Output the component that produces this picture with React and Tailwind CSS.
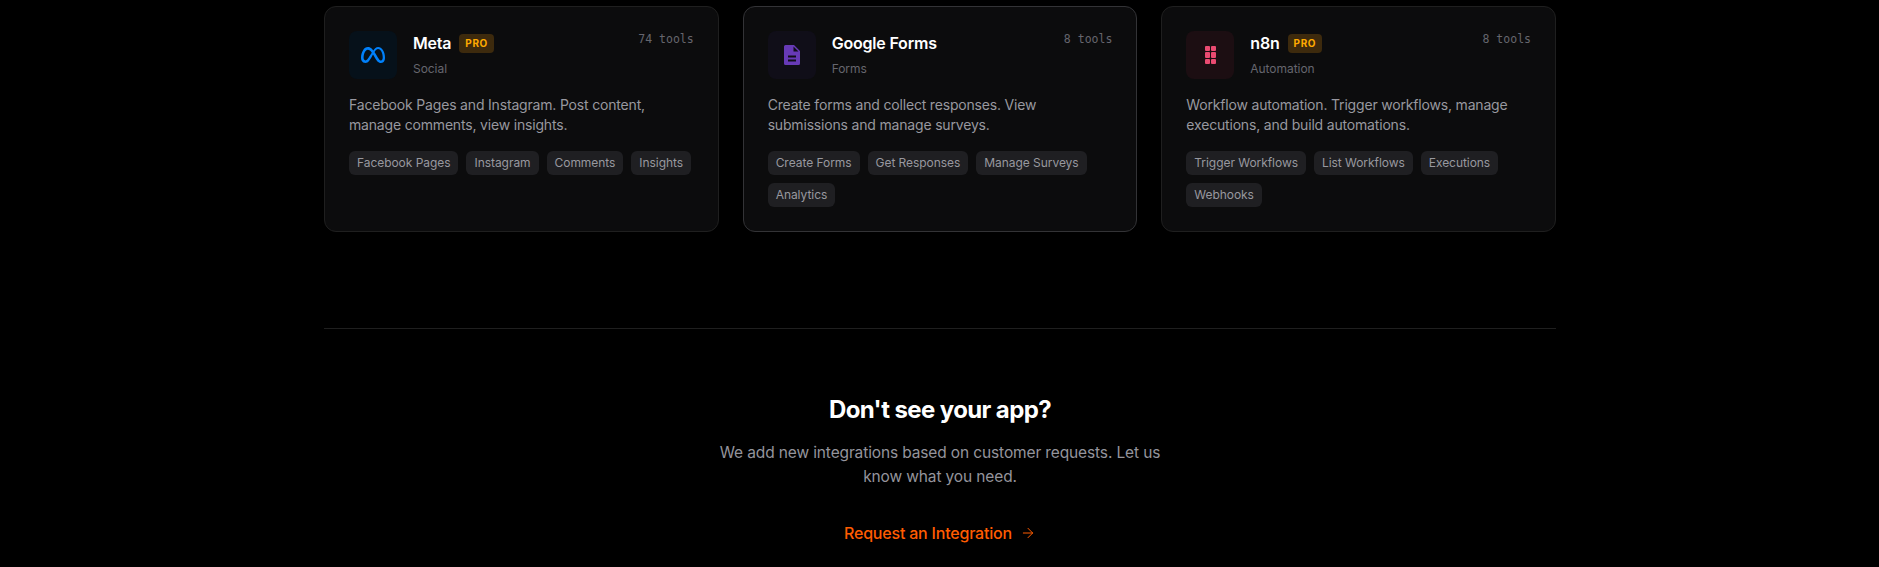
import React from 'react';
import { ArrowRight } from 'lucide-react';
import { SiMeta } from 'react-icons/si';

const FormsIcon = () => (
  <svg width="24" height="24" viewBox="0 0 24 24" fill="#673ab7">
    <path fillRule="evenodd" d="M5.5 2h8.5l6 6v12.5a1.5 1.5 0 0 1-1.5 1.5h-13A1.5 1.5 0 0 1 4 20.5v-17A1.5 1.5 0 0 1 5.5 2zM13.500 3.500V8.500h5zM8 12.500v2h8v-2zM8 16.500v2h8v-2z" />
  </svg>
);

const N8nIcon = () => (
  <div className="grid grid-cols-2 gap-px w-[11px]">
    {[0, 1, 2, 3, 4, 5].map(i => (
      <div key={i} className="h-[5.5px] rounded-[1px] bg-[#ea4b71]" />
    ))}
  </div>
);

const apps = [
  {
    name: 'Meta',
    pro: true,
    category: 'Social',
    tools: '74 tools',
    description: 'Facebook Pages and Instagram. Post content, manage comments, view insights.',
    tags: ['Facebook Pages', 'Instagram', 'Comments', 'Insights'],
    icon: <SiMeta size={24} color="#0081fb" />,
    iconBg: 'bg-[#06111a]',
    border: 'border-[#1f1f1f]',
  },
  {
    name: 'Google Forms',
    category: 'Forms',
    tools: '8 tools',
    description: 'Create forms and collect responses. View submissions and manage surveys.',
    tags: ['Create Forms', 'Get Responses', 'Manage Surveys', 'Analytics'],
    icon: <FormsIcon />,
    iconBg: 'bg-[#100e18]',
    border: 'border-[#333336]',
  },
  {
    name: 'n8n',
    pro: true,
    category: 'Automation',
    tools: '8 tools',
    description: 'Workflow automation. Trigger workflows, manage executions, and build automations.',
    tags: ['Trigger Workflows', 'List Workflows', 'Executions', 'Webhooks'],
    icon: <N8nIcon />,
    iconBg: 'bg-[#1c0e12]',
    border: 'border-[#1f1f1f]',
  },
];

const AppCard = ({ app }) => (
  <div className={`rounded-xl border ${app.border} bg-[#0c0c0d] p-6`}>
    <div className="flex items-start justify-between">
      <div className="flex items-start gap-4">
        <div className={`flex h-12 w-12 items-center justify-center rounded-lg ${app.iconBg}`}>
          {app.icon}
        </div>
        <div>
          <div className="flex items-center gap-2">
            <h3 className="text-base font-semibold leading-6 tracking-[-0.2px] text-white">{app.name}</h3>
            {app.pro && (
              <span className="rounded bg-[#3d2a0d] px-1.5 py-[3px] text-[10px] font-bold leading-[13px] tracking-[0.6px] text-[#ffaa00]">PRO</span>
            )}
          </div>
          <p className="mt-1.5 text-xs leading-4 tracking-[-0.05px] text-[#66666d]">{app.category}</p>
        </div>
      </div>
      <span className="font-['DejaVu_Sans_Mono',monospace] text-[11.5px] leading-4 text-[#66666d]">{app.tools}</span>
    </div>
    <p className="mt-4 text-sm leading-5 tracking-[-0.18px] text-[#98989f]">{app.description}</p>
    <div className="mt-4 flex flex-wrap gap-2">
      {app.tags.map(tag => (
        <span key={tag} className="rounded-md bg-[#1f1f22] px-2 py-1 text-xs leading-4 tracking-[-0.05px] text-[#98989f]">{tag}</span>
      ))}
    </div>
  </div>
);

export default function App() {
  return (
    <div className="h-[567px] overflow-hidden bg-black font-['Inter',sans-serif]">
      <div className="mx-auto max-w-[1280px] pl-[24.5px] pr-[23.5px] pt-1.5">
        <div className="grid grid-cols-3 gap-6">
          {apps.map(app => <AppCard key={app.name} app={app} />)}
        </div>
        <div className="mt-24 border-t border-[#1f1f1f] pt-16 text-center">
          <h2 className="text-2xl font-bold leading-[34px] tracking-[-0.6px] text-white">Don't see your app?</h2>
          <p className="mx-auto mt-3.5 max-w-md text-[15.5px] leading-6 tracking-[-0.13px] text-[#94949c]">
            We add new integrations based on customer requests. Let us know what you need.
          </p>
          <a href="#" className="mt-8 inline-flex items-center gap-2 text-base font-medium leading-6 tracking-[-0.2px] text-[#ff5c00]">
            Request an Integration
            <ArrowRight size={16} strokeWidth={1.5} />
          </a>
        </div>
      </div>
    </div>
  );
}
